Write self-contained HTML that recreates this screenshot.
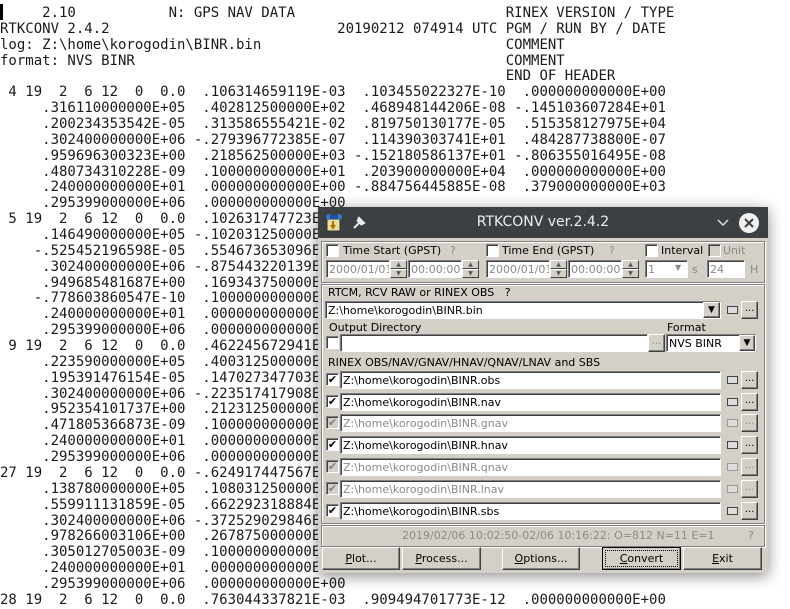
<!DOCTYPE html>
<html><head><meta charset="utf-8"><style>
html,body{margin:0;padding:0;width:790px;height:599px;overflow:hidden;background:#fff;}
pre{margin:0;position:absolute;left:0;top:6px;font-family:"DejaVu Sans Mono","Liberation Mono",monospace;font-size:14px;line-height:15.86px;color:#1a1a1a;letter-spacing:0;}
.cur{position:absolute;left:0;top:4px;width:3px;height:16px;background:#000;}
.dlg{position:absolute;left:318px;top:207px;width:450px;height:366px;background:#d4d0c8;box-shadow:0 3px 14px rgba(0,0,0,.45);font-family:"DejaVu Sans","Liberation Sans",sans-serif;font-size:11px;color:#000;}
.tb{position:absolute;left:0;top:0;width:450px;height:31px;background:#3d4043;color:#eee;}
.tb .t{position:absolute;left:0;width:450px;top:7px;text-align:center;font-size:14px;}
.ab{position:absolute;}
.grp{position:absolute;border:1px solid #808080;box-shadow:inset 1px 1px 0 #fff,1px 1px 0 #fff;}
.in{position:absolute;background:#fff;border:1px solid;border-color:#808080 #fff #fff #808080;box-shadow:inset 1px 1px 0 #404040;height:18px;line-height:18px;padding-left:2px;box-sizing:border-box;overflow:hidden;white-space:nowrap;}
.g{color:#8a8a8a;}
.cb{position:absolute;width:13px;height:13px;background:#fff;border:1px solid;border-color:#808080 #fff #fff #808080;box-sizing:border-box;box-shadow:inset 1px 1px 0 #404040;font-size:11px;line-height:11px;text-align:center;}
.cb.d{background:#d4d0c8;color:#808080;}
.btn{position:absolute;background:#d4d0c8;border:1px solid;border-color:#fff #404040 #404040 #fff;box-shadow:inset -1px -1px 0 #808080;box-sizing:border-box;text-align:center;}
.sm{width:17px;height:18px;font-size:10px;line-height:14px;}
.ic{position:absolute;width:11px;height:8px;border:1px solid #444;background:#ddd;box-sizing:border-box;}
.ic.d{border-color:#999;}
.lbl{position:absolute;white-space:nowrap;}
.sp{position:absolute;width:17px;height:18px;}
.sp div{height:9px;box-sizing:border-box;border:1px solid;border-color:#fff #404040 #404040 #fff;background:#d4d0c8;font-size:6px;line-height:7px;text-align:center;color:#555;}
</style></head><body>
<pre>     2.10           N: GPS NAV DATA                         RINEX VERSION / TYPE
RTKCONV 2.4.2                           20190212 074914 UTC PGM / RUN BY / DATE
log: Z:\home\korogodin\BINR.bin                             COMMENT
format: NVS BINR                                            COMMENT
                                                            END OF HEADER
 4 19  2  6 12  0  0.0  .106314659119E-03  .103455022327E-10  .000000000000E+00
     .316110000000E+05  .402812500000E+02  .468948144206E-08 -.145103607284E+01
     .200234353542E-05  .313586555421E-02  .819750130177E-05  .515358127975E+04
     .302400000000E+06 -.279396772385E-07  .114390303741E+01  .484287738800E-07
     .959696300323E+00  .218562500000E+03 -.152180586137E+01 -.806355016495E-08
     .480734310228E-09  .100000000000E+01  .203900000000E+04  .000000000000E+00
     .240000000000E+01  .000000000000E+00 -.884756445885E-08  .379000000000E+03
     .295399000000E+06  .000000000000E+00
 5 19  2  6 12  0  0.0  .102631747723E-03  .102318153950E-10  .000000000000E+00
     .146490000000E+05 -.102031250000E+02  .470126747590E-08  .118234567890E+01
    -.525452196598E-05  .554673653096E-02  .615231692791E-05  .515362817001E+04
     .302400000000E+06 -.875443220139E-07  .110234567801E+01  .223517417908E-07
     .949685481687E+00  .169343750000E+03  .751234567890E+00 -.812367201230E-08
    -.778603860547E-10  .100000000000E+01  .203900000000E+04  .000000000000E+00
     .240000000000E+01  .000000000000E+00 -.107102096081E-07  .146000000000E+02
     .295399000000E+06  .000000000000E+00
 9 19  2  6 12  0  0.0  .462245672941E-03  .261479726760E-11  .000000000000E+00
     .223590000000E+05  .400312500000E+02  .461233543210E-08  .210345678901E+01
     .195391476154E-05  .147027347703E-02  .883266329765E-05  .515371265793E+04
     .302400000000E+06 -.223517417908E-07  .115345678901E+01  .745058059692E-08
     .952354101737E+00  .212312500000E+03  .543210987654E+00 -.823248291030E-08
     .471805366873E-09  .100000000000E+01  .203900000000E+04  .000000000000E+00
     .240000000000E+01  .000000000000E+00  .465661287308E-08  .223000000000E+02
     .295399000000E+06  .000000000000E+00
27 19  2  6 12  0  0.0 -.624917447567E-04 -.568434188608E-12  .000000000000E+00
     .138780000000E+05  .108031250000E+03  .412345678901E-08  .312345678901E+01
     .559911131859E-05  .662292318884E-02  .723456789012E-05  .515365432109E+04
     .302400000000E+06 -.372529029846E-07  .112345678901E+01  .134110450745E-06
     .978266003106E+00  .267875000000E+03  .654321098765E+00 -.801234567890E-08
     .305012705003E-09  .100000000000E+01  .203900000000E+04  .000000000000E+00
     .240000000000E+01  .000000000000E+00  .186264514923E-08  .130000000000E+02
     .295399000000E+06  .000000000000E+00
28 19  2  6 12  0  0.0  .763044337821E-03  .909494701773E-12  .000000000000E+00</pre>
<div class="cur"></div>

<div class="dlg">
 <div class="tb">
  <svg class="ab" style="left:6px;top:5px" width="20" height="20"><rect x="3" y="7" width="13" height="12" fill="#e8e0a0" stroke="#333"/><circle cx="5" cy="5" r="3" fill="#3a78c8"/><circle cx="15" cy="5" r="3" fill="#3a78c8"/><rect x="6" y="3" width="8" height="4" fill="#2050a0"/><path d="M9 9v6M7 13l2 3 2-3" stroke="#b07000" stroke-width="2" fill="none"/></svg>
  <svg class="ab" style="left:34px;top:9px" width="14" height="14"><path d="M2 12l5-5M5 4l5 5M7 2l5 5-2 1-4-4z" stroke="#eee" stroke-width="2" fill="#eee"/></svg>
  <div class="t">RTKCONV ver.2.4.2</div>
  <svg class="ab" style="left:398px;top:9px" width="14" height="12"><path d="M2 4l5 5 5-5" stroke="#ddd" stroke-width="1.5" fill="none"/></svg>
  <svg class="ab" style="left:420px;top:5px" width="22" height="22"><circle cx="11" cy="11" r="10" fill="#f0f0f0"/><path d="M7 7l8 8M15 7l-8 8" stroke="#3d4043" stroke-width="2"/></svg>
 </div>

 <div class="grp" style="left:3px;top:34px;width:442px;height:40px"></div>
 <div class="cb" style="left:8px;top:37px"></div><div class="lbl" style="left:25px;top:37px">Time Start (GPST)</div><div class="lbl g" style="left:132px;top:37px">?</div>
 <div class="cb" style="left:168px;top:37px"></div><div class="lbl" style="left:184px;top:37px">Time End (GPST)</div><div class="lbl g" style="left:291px;top:37px">?</div>
 <div class="cb" style="left:327px;top:37px"></div><div class="lbl" style="left:343px;top:37px">Interval</div>
 <div class="cb d" style="left:390px;top:37px"></div><div class="lbl g" style="left:405px;top:37px">Unit</div>
 <div class="in g" style="left:8px;top:53px;width:64px">2000/01/01</div><div class="sp" style="left:72px;top:53px"><div>▲</div><div>▼</div></div>
 <div class="in g" style="left:90px;top:53px;width:54px">00:00:00</div><div class="sp" style="left:144px;top:53px"><div>▲</div><div>▼</div></div>
 <div class="in g" style="left:168px;top:53px;width:64px">2000/01/01</div><div class="sp" style="left:232px;top:53px"><div>▲</div><div>▼</div></div>
 <div class="in g" style="left:250px;top:53px;width:54px">00:00:00</div><div class="sp" style="left:304px;top:53px"><div>▲</div><div>▼</div></div>
 <div class="in g" style="left:327px;top:53px;width:43px">1</div><div class="lbl g" style="left:357px;top:56px;font-size:8px">▼</div><div class="lbl g" style="left:374px;top:56px">s</div>
 <div class="in g" style="left:389px;top:53px;width:38px">24</div><div class="lbl g" style="left:432px;top:56px">H</div>

 <div class="grp" style="left:3px;top:77px;width:442px;height:238px"></div>
 <div class="lbl" style="left:10px;top:79px">RTCM, RCV RAW or RINEX OBS &nbsp;&nbsp;?</div>
 <div class="in" style="left:7px;top:94px;width:396px">Z:\home\korogodin\BINR.bin</div>
 <div class="btn" style="left:385px;top:95px;width:17px;height:16px;font-size:9px;line-height:14px">▼</div>
 <div class="ic" style="left:409px;top:99px"></div><div class="btn sm" style="left:423px;top:94px">...</div>
 <div class="lbl" style="left:11px;top:114px">Output Directory</div><div class="lbl" style="left:349px;top:114px">Format</div>
 <div class="cb" style="left:8px;top:129px"></div>
 <div class="in" style="left:22px;top:127px;width:308px"></div><div class="btn sm g" style="left:330px;top:127px">...</div>
 <div class="in" style="left:348px;top:127px;width:90px">NVS BINR</div><div class="btn" style="left:421px;top:128px;width:16px;height:16px;font-size:9px;line-height:14px">▼</div>
 <div class="lbl" style="left:10px;top:149px">RINEX OBS/NAV/GNAV/HNAV/QNAV/LNAV and SBS</div>

 <div class="cb" style="left:8px;top:166px">✔</div><div class="in" style="left:22px;top:164px;width:381px">Z:\home\korogodin\BINR.obs</div><div class="ic" style="left:409px;top:169px"></div><div class="btn sm" style="left:423px;top:164px">...</div>
 <div class="cb" style="left:8px;top:188px">✔</div><div class="in" style="left:22px;top:186px;width:381px">Z:\home\korogodin\BINR.nav</div><div class="ic" style="left:409px;top:191px"></div><div class="btn sm" style="left:423px;top:186px">...</div>
 <div class="cb d" style="left:8px;top:209px">✔</div><div class="in g" style="left:22px;top:207px;width:381px">Z:\home\korogodin\BINR.gnav</div><div class="ic d" style="left:409px;top:212px"></div><div class="btn sm g" style="left:423px;top:207px">...</div>
 <div class="cb" style="left:8px;top:231px">✔</div><div class="in" style="left:22px;top:229px;width:381px">Z:\home\korogodin\BINR.hnav</div><div class="ic" style="left:409px;top:234px"></div><div class="btn sm" style="left:423px;top:229px">...</div>
 <div class="cb d" style="left:8px;top:253px">✔</div><div class="in g" style="left:22px;top:251px;width:381px">Z:\home\korogodin\BINR.qnav</div><div class="ic d" style="left:409px;top:256px"></div><div class="btn sm g" style="left:423px;top:251px">...</div>
 <div class="cb d" style="left:8px;top:275px">✔</div><div class="in g" style="left:22px;top:273px;width:381px">Z:\home\korogodin\BINR.lnav</div><div class="ic d" style="left:409px;top:278px"></div><div class="btn sm g" style="left:423px;top:273px">...</div>
 <div class="cb" style="left:8px;top:297px">✔</div><div class="in" style="left:22px;top:295px;width:381px">Z:\home\korogodin\BINR.sbs</div><div class="ic" style="left:409px;top:300px"></div><div class="btn sm" style="left:423px;top:295px">...</div>

 <div class="grp" style="left:3px;top:318px;width:442px;height:20px"></div>
 <div class="lbl g" style="left:84px;top:322px">2019/02/06 10:02:50-02/06 10:16:22: O=812 N=11 E=1</div><div class="lbl g" style="left:430px;top:322px">?</div>

 <div class="btn" style="left:4px;top:340px;width:78px;height:23px;line-height:21px"><u>P</u>lot...</div>
 <div class="btn" style="left:84px;top:340px;width:79px;height:23px;line-height:21px"><u>P</u>rocess...</div>
 <div class="btn" style="left:184px;top:340px;width:78px;height:23px;line-height:21px"><u>O</u>ptions...</div>
 <div class="btn" style="left:284px;top:340px;width:79px;height:23px;line-height:21px;border:1px solid #000;outline:1px dotted #000;outline-offset:-4px"><u>C</u>onvert</div>
 <div class="btn" style="left:365px;top:340px;width:79px;height:23px;line-height:21px"><u>E</u>xit</div>
</div>
</body></html>
